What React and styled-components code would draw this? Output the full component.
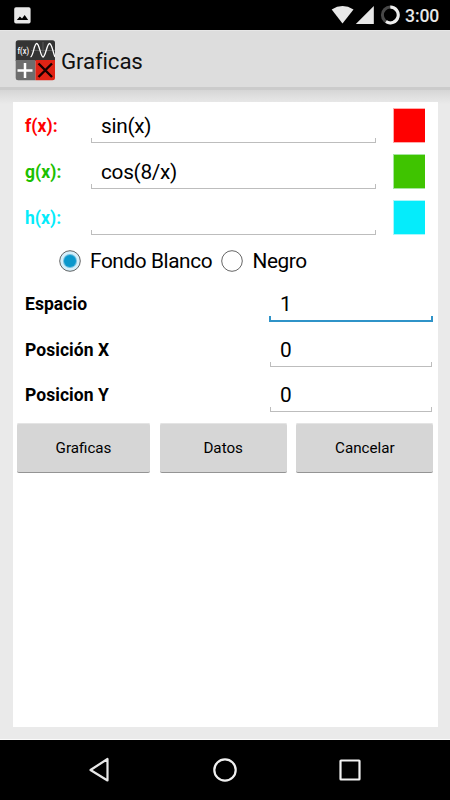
import React, { useState } from "react";
import styled, { createGlobalStyle } from "styled-components";

const GlobalStyle = createGlobalStyle`
  * { box-sizing: border-box; }
  body { margin: 0; background: #000; }
`;

const Screen = styled.div`
  width: 450px;
  height: 800px;
  display: flex;
  flex-direction: column;
  overflow: hidden;
  background: #eaeaea;
  color: #000;
  font-family: Roboto, "Liberation Sans", sans-serif;
`;

const StatusBar = styled.header`
  height: 30px;
  flex: none;
  display: flex;
  align-items: center;
  justify-content: space-between;
  padding: 0 10px 0 14px;
  background: #000;
  color: #e8e8e8;
`;

const StatusGroup = styled.div`
  display: flex;
  align-items: center;
`;

const Clock = styled.span`
  width: 35px;
  margin-left: 5px;
  padding-top: 2px;
  font-size: 17.6px;
  font-weight: 500;
  line-height: 28px;
  letter-spacing: -0.1px;
  white-space: nowrap;
`;

const AppBar = styled.div`
  height: 60px;
  flex: none;
  display: flex;
  align-items: center;
  gap: 5px;
  padding: 2px 15px 0;
  background: #ddd;
  border-top: 1px solid #e6e6e6;
  border-bottom: 3px solid #cbcbcb;
`;

const Title = styled.h1`
  margin: 2px 0 0;
  font-size: 22.3px;
  font-weight: 400;
  line-height: 30px;
  letter-spacing: -0.15px;
  color: #111;
`;

const Content = styled.main`
  flex: 1;
  display: flex;
  padding: 12px 12.5px 12px;
  border-bottom: 1px solid #fafafa;
  background: linear-gradient(#d6d6d6, #eaeaea 14px);
`;

const Card = styled.section`
  flex: 1;
  height: 625px;
  padding-top: 1px;
  background: #fff;
`;

const Row = styled.div`
  height: ${(p) => p.$height || 46}px;
  display: flex;
  padding: ${(p) => p.$top || 5}px 4.5px 0 12.5px;
`;

const Label = styled.label`
  width: ${(p) => p.$width}px;
  flex: none;
  padding-top: 1px;
  font-size: 17.5px;
  font-weight: 700;
  line-height: 35px;
  letter-spacing: 0.06px;
  color: ${(p) => p.$color || "#000"};
`;

const Field = styled.div`
  width: ${(p) => p.$width}px;
  height: ${(p) => (p.$focused ? 36 : 35)}px;
  flex: none;
  display: flex;
  flex-direction: column;
  justify-content: flex-end;
`;

const Input = styled.input`
  width: 100%;
  height: 29px;
  padding: 5px 0 0 ${(p) => p.$indent || 10}px;
  border: 0;
  outline: 0;
  background: transparent;
  color: #000;
  caret-color: transparent;
  font: 400 20.8px/24px Roboto, "Liberation Sans", sans-serif;
  letter-spacing: -0.3px;
`;

const Underline = styled.div`
  height: ${(p) => (p.$focused ? 6 : 5)}px;
  flex: none;
  border: solid ${(p) => (p.$focused ? "#2f93c8" : "#bdbdbd")};
  border-width: ${(p) => (p.$focused ? "0 2px 2px" : "0 1px 1px")};
`;

const Swatch = styled.button`
  width: 32px;
  height: 35px;
  margin-left: 17px;
  padding: 0;
  border: 1px solid ${(p) => p.$edge};
  border-right-width: 0;
  background: ${(p) => p.$color};
`;

const RadioRow = styled.div`
  height: 39px;
  display: flex;
  align-items: center;
  padding: 1px 0 0 46px;
`;

const Radio = styled.button`
  display: flex;
  align-items: center;
  gap: 9.5px;
  width: ${(p) => p.$width}px;
  padding: 0;
  border: 0;
  background: none;
  color: #000;
  white-space: nowrap;
  font: 400 20.8px/30px Roboto, "Liberation Sans", sans-serif;
  letter-spacing: -0.4px;
`;

const ButtonRow = styled.div`
  display: grid;
  grid-template-columns: 133px 127px 137px;
  gap: 9.7px;
  padding: 5.9px 0 0 4.5px;
`;

const Button = styled.button`
  height: 50px;
  padding: 1px 0 0;
  border: 0;
  border-bottom: 1px solid #949494;
  border-radius: 2px;
  background: #d6d6d6;
  box-shadow: inset 0 1px #e4e4e4;
  color: #000;
  font: 400 15.2px/20px Roboto, "Liberation Sans", sans-serif;
`;

const NavBar = styled.nav`
  height: 60px;
  flex: none;
  display: grid;
  grid-template-columns: repeat(3, 125px);
  justify-content: center;
  justify-items: center;
  align-items: center;
  background: #000;
`;

const Icon = styled.svg`
  display: block;
  flex: none;
`;

const PictureIcon = () => (
  <Icon width="17" height="17" viewBox="0 0 17 17">
    <rect x="0.2" y="0.2" width="16.4" height="16.4" rx="1.8" fill="#e8e8e8" />
    <path d="M2.8 13 5.9 9.4 8 11.6 10.7 8 14.2 13Z" fill="#000" />
  </Icon>
);

const SignalIcons = () => (
  <Icon width="70" height="20" viewBox="0 0 70 20">
    <path d="M1.7 4.5Q12.5 -2.3 23.5 4.5L12.5 18.6Z" fill="#e8e8e8" />
    <path d="M25.8 19 43.8 1V19Z" fill="#e8e8e8" />
    <g fill="none" strokeWidth="3" transform="translate(60.3 10)">
      <circle r="7.9" stroke="#484848" />
      <path d="M0 -7.9A7.9 7.9 0 1 1 -4.3 6.6" stroke="#eee" />
    </g>
  </Icon>
);

const FxText = styled.text`
  font-family: Roboto, sans-serif;
  font-size: 8.5px;
  font-weight: 500;
  fill: #fff;
`;

const AppLogo = () => (
  <Icon width="41" height="41" viewBox="0 0 41 41">
    <clipPath id="logo">
      <rect x="0.7" y="0.3" width="39.3" height="40" rx="2.5" />
    </clipPath>
    <g clipPath="url(#logo)">
      <rect width="41" height="21" fill="#343434" />
      <rect y="20" width="20.5" height="21" fill="#6d6d6d" />
      <rect x="20.5" y="20" width="20.5" height="21" fill="#e02315" />
      <path d="M16 10.5H40M28 2V18" stroke="#5a5a5a" fill="none" />
      <path
        d="M15.5 17C18.5 16 19 3.500 21.700 3.500S25.500 17 28 17S32 3.500 34.500 3.500C37 3.500 38 13 40 17"
        stroke="#fff"
        strokeWidth="1.3"
        fill="none"
      />
      <path d="M2.500 30.500H17.500M10 23V38" stroke="#fff" strokeWidth="2.500" />
      <path d="M23.500 23.500 37 37M37 23.500 23.500 37" stroke="#160000" strokeWidth="2.400" />
      <FxText x="2.5" y="13.5" textLength="11.5" lengthAdjust="spacingAndGlyphs">
        f(x)
      </FxText>
    </g>
  </Icon>
);

const RadioMark = ({ on }) => (
  <Icon width="22" height="22" viewBox="0 0 22 22">
    <circle cx="11" cy="11" r="10.3" fill={on ? "#d5effa" : "#fff"} stroke="#555" strokeWidth="0.9" />
    {on && (
      <>
        <circle cx="11" cy="11" r="7" fill="#6fbfe0" />
        <circle cx="11" cy="11" r="6" fill="#0a98cc" />
      </>
    )}
  </Icon>
);

const TextField = ({ width, value, focused, indent }) => {
  const [text, setText] = useState(value);
  return (
    <Field $width={width} $focused={focused}>
      <Input value={text} $indent={indent} onChange={(e) => setText(e.target.value)} />
      <Underline $focused={focused} />
    </Field>
  );
};

const functions = [
  { name: "f(x):", value: "sin(x)", color: "#ff0000", edge: "#ffaaaa", label: "#ff0000" },
  { name: "g(x):", value: "cos(8/x)", color: "#3fc400", edge: "#a5e69f", label: "#1cc000" },
  { name: "h(x):", value: "", color: "#05ecfb", edge: "#a9f7fb", label: "#05ecfb" },
];

const settings = [
  { name: "Espacio", value: "1", focused: true },
  { name: "Posición X", value: "0" },
  { name: "Posicion Y", value: "0" },
];

export default function App() {
  const [background, setBackground] = useState("blanco");
  return (
    <>
      <GlobalStyle />
      <Screen>
        <StatusBar>
          <PictureIcon />
          <StatusGroup>
            <SignalIcons />
            <Clock>3:00</Clock>
          </StatusGroup>
        </StatusBar>
        <AppBar>
          <AppLogo />
          <Title>Graficas</Title>
        </AppBar>
        <Content>
          <Card>
            {functions.map((f) => (
              <Row key={f.name}>
                <Label $width={66} $color={f.label}>{f.name}</Label>
                <TextField width={285} value={f.value} />
                <Swatch $color={f.color} $edge={f.edge} aria-label={f.name} />
              </Row>
            ))}
            <RadioRow>
              <Radio $width={162.5} onClick={() => setBackground("blanco")}>
                <RadioMark on={background === "blanco"} />
                Fondo Blanco
              </Radio>
              <Radio $width={90} onClick={() => setBackground("negro")}>
                <RadioMark on={background === "negro"} />
                Negro
              </Radio>
            </RadioRow>
            {settings.map((s) => (
              <Row key={s.name} $height={45.7} $top={6}>
                <Label $width={s.focused ? 244 : 245}>{s.name}</Label>
                <TextField width={s.focused ? 164 : 162} value={s.value} focused={s.focused} indent={s.focused ? 11 : 10} />
              </Row>
            ))}
            <ButtonRow>
              <Button>Graficas</Button>
              <Button>Datos</Button>
              <Button>Cancelar</Button>
            </ButtonRow>
          </Card>
        </Content>
        <NavBar>
          <Icon width="24" height="26" viewBox="0 0 24 26">
            <path d="M19.5 2V23.5L2.5 13Z" fill="none" stroke="#e8e8e8" strokeWidth="2.2" strokeLinejoin="round" />
          </Icon>
          <Icon width="26" height="26" viewBox="0 0 26 26">
            <circle cx="13" cy="13" r="10.7" fill="none" stroke="#f0f0f0" strokeWidth="2.2" />
          </Icon>
          <Icon width="26" height="26" viewBox="0 0 26 26">
            <rect x="3.5" y="3.5" width="19" height="19" rx="0.5" fill="none" stroke="#f0f0f0" strokeWidth="2.2" />
          </Icon>
        </NavBar>
      </Screen>
    </>
  );
}
